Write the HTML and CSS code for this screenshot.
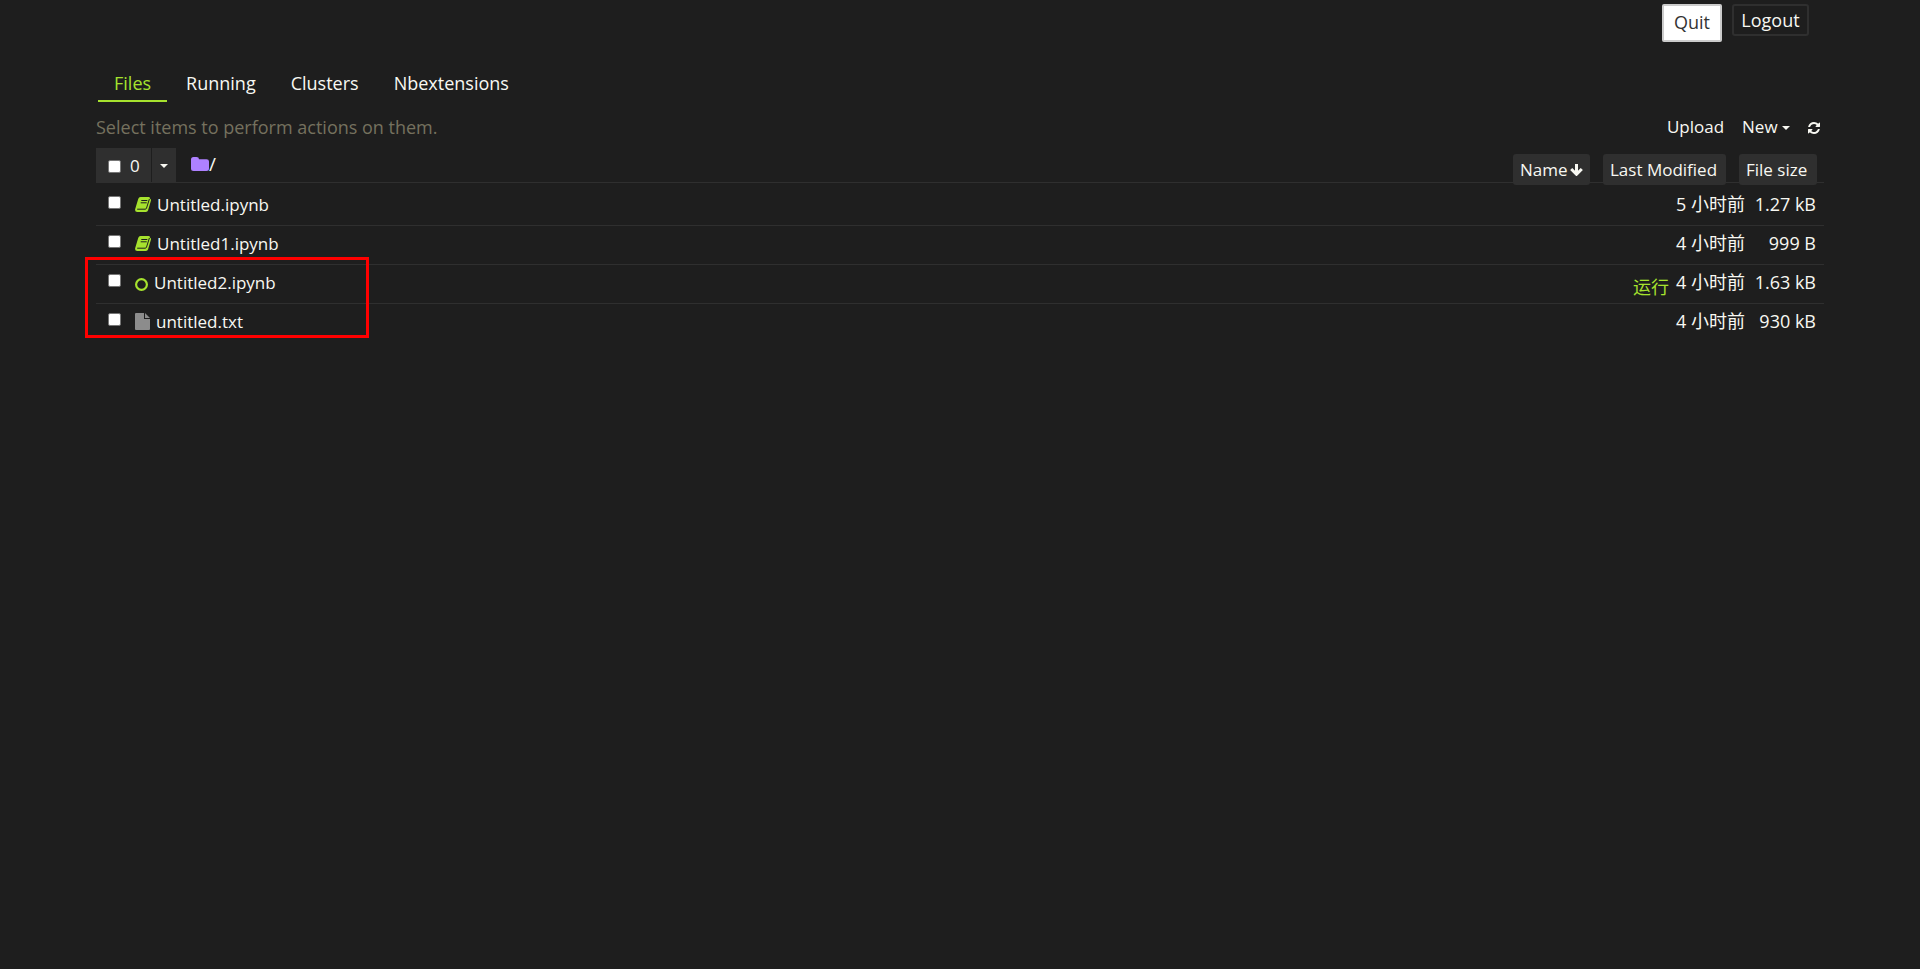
FILE: index.html
```html
<!DOCTYPE html>
<html lang="en">
<head>
    <meta charset="UTF-8">
    <meta name="viewport" content="width=device-width, initial-scale=1.0">
    <title>Home Page - Select or create a notebook</title>
    <link rel="stylesheet" href="styles.css">
</head>
<body>
    <header>
        <button class="quit">Quit</button>
        <button class="logout">Logout</button>
    </header>

    <main>
        <nav>
            <ul>
                <li><a class="active" href="#notebooks">Files</a></li>
                <li><a href="#running">Running</a></li>
                <li><a href="#clusters">Clusters</a></li>
                <li><a href="#nbextensions">Nbextensions</a></li>
            </ul>
        </nav>

        <div class="toolbar">
            <p>Select items to perform actions on them.</p>
            <div class="actions">
                <button class="upload">Upload</button>
                <button class="new">New <span class="caret"></span></button>
                <button class="refresh" aria-label="Refresh">
                    <svg width="12" height="12" viewBox="0 0 1536 1536"><path fill="currentColor" d="M1511 928q0 5-1 7-64 268-268 434.500T764 1536q-146 0-282.500-55T238 1324l-129 129q-19 19-45 19t-45-19-19-45V960q0-26 19-45t45-19h448q26 0 45 19t19 45-19 45l-137 137q71 66 161 102t187 36q134 0 250-65t186-179q11-17 53-117 8-23 30-23h192q13 0 22.500 9.500t9.500 22.500zm25-800v448q0 26-19 45t-45 19h-448q-26 0-45-19t-19-45 19-45l138-138Q969 256 768 256q-134 0-250 65T332 500q-11 17-53 117-8 23-30 23H50q-13 0-22.500-9.500T18 608v-7q65-268 270-434.500T768 0q146 0 284 55.500T1297 212l130-129q19-19 45-19t45 19 19 45z"/></svg>
                </button>
            </div>
        </div>

        <div class="list">
            <div class="list-header">
                <div class="select-group">
                    <label class="select-all"><input type="checkbox"> 0</label>
                    <button class="select-menu" aria-label="Select menu"><span class="caret"></span></button>
                </div>
                <a class="breadcrumb" href="#root">
                    <svg width="18" height="14" viewBox="0 0 18 14"><path fill="#ae81ff" d="M0 2.500Q0 0 2.500 0h3Q8 0 8 2.200h7.500q2.500 0 2.500 2.300v7q0 2.500-2.500 2.500h-13Q0 14 0 11.500z"/></svg><span>/</span>
                </a>
                <div class="sort">
                    <button class="sort-name">Name
                        <svg width="13" height="12" viewBox="0 0 13 12"><path d="M6.500 0v9M1.200 5l5.300 5.300L11.800 5" fill="none" stroke="currentColor" stroke-width="3"/></svg>
                    </button>
                    <button class="sort-date">Last Modified</button>
                    <button class="sort-size">File size</button>
                </div>
            </div>

            <div class="row first">
                <input type="checkbox" id="f1" aria-label="Untitled.ipynb">
                <svg class="book" width="16" height="15" viewBox="0 0 16 15"><path fill="#a6e22e" d="M5.500 0h8.300q1.400 0 1 1.500l.7.500q.7.700.4 1.700l-2.800 9.500q-.5 1.800-2.200 1.800H2.300Q-.5 15 .2 12L3.200 2Q3.800 0 5.500 0z"/><path d="M6.300 3.500h6M5.700 5.800h6M2.200 12.200h8q1 0 1.300-1L14.400 2" fill="none" stroke="#1e1e1e"/></svg>
                <a href="#Untitled.ipynb">Untitled.ipynb</a>
                <span class="date">5 小时前</span>
                <span class="size">1.27 kB</span>
            </div>
            <div class="row">
                <input type="checkbox" id="f2" aria-label="Untitled1.ipynb">
                <svg class="book" width="16" height="15" viewBox="0 0 16 15"><path fill="#a6e22e" d="M5.500 0h8.300q1.400 0 1 1.500l.7.500q.7.700.4 1.700l-2.800 9.500q-.5 1.800-2.200 1.800H2.300Q-.5 15 .2 12L3.200 2Q3.800 0 5.500 0z"/><path d="M6.300 3.500h6M5.700 5.800h6M2.200 12.200h8q1 0 1.300-1L14.400 2" fill="none" stroke="#1e1e1e"/></svg>
                <a href="#Untitled1.ipynb">Untitled1.ipynb</a>
                <span class="date">4 小时前</span>
                <span class="size">999 B</span>
            </div>
            <div class="row">
                <input type="checkbox" id="f3" aria-label="Untitled2.ipynb">
                <svg class="circle" width="13" height="13" viewBox="0 0 13 13"><circle cx="6.500" cy="6.500" r="5.400" fill="none" stroke="#a6e22e" stroke-width="2.200"/></svg>
                <a href="#Untitled2.ipynb">Untitled2.ipynb</a>
                <span class="running">运行</span>
                <span class="date">4 小时前</span>
                <span class="size">1.63 kB</span>
            </div>
            <div class="row">
                <input type="checkbox" id="f4" aria-label="untitled.txt">
                <svg class="file" width="15" height="17" viewBox="0 0 15 17"><path fill="#8c8c8c" d="M1 0h8v6h6v10q0 1-1 1H1q-1 0-1-1V1q0-1 1-1zM10 0l5 5h-5z"/></svg>
                <a href="#untitled.txt">untitled.txt</a>
                <span class="date">4 小时前</span>
                <span class="size">930 kB</span>
            </div>
            <div class="highlight"></div>
        </div>
    </main>
</body>
</html>
```
FILE: styles.css
```css
* {
    box-sizing: border-box;
}
body {
    margin: 0;
    background-color: #1e1e1e;
    color: #f8f8f2;
    font-family: "Open Sans", "Noto Sans CJK SC", sans-serif;
    font-size: 17px;
    line-height: 24px;
}
a {
    color: inherit;
    text-decoration: none;
}
button {
    background: none;
    border: none;
    padding: 0;
    color: inherit;
    font: inherit;
    cursor: pointer;
}
svg {
    display: block;
    flex: none;
}
input[type="checkbox"] {
    appearance: none;
    flex: none;
    width: 13px;
    height: 13px;
    margin: 0;
    background-color: #fff;
    border: 1px solid #767676;
    border-radius: 2px;
}
input[type="checkbox"]:checked {
    background-color: #a6e22e;
}
.caret {
    display: inline-block;
    border-top: 4px solid;
    border-left: 4px solid transparent;
    border-right: 4px solid transparent;
    vertical-align: middle;
}
header {
    display: flex;
    justify-content: flex-end;
    align-items: flex-start;
    gap: 10px;
    height: 64px;
    padding: 4px 111px 0 0;
}
.quit {
    width: 60px;
    height: 38px;
    padding-bottom: 2px;
    background-color: #fff;
    border: 2px solid #ccc;
    border-radius: 2px;
    color: #333;
    font-size: 18px;
}
.logout {
    width: 77px;
    height: 32px;
    border: 2px solid #2f2f2f;
    border-radius: 3px;
    font-size: 18px;
}
main {
    padding: 0 5%;
}
nav ul {
    display: flex;
    gap: 3px;
    list-style: none;
    margin: 0;
    padding: 0 2px;
}
nav a {
    display: block;
    height: 38px;
    padding: 7px 16px 0;
    font-size: 18px;
}
nav .active {
    color: #a6e22e;
    border-bottom: 2px solid #a6e22e;
}
.toolbar {
    display: flex;
    justify-content: space-between;
    height: 46px;
    padding-top: 13px;
}
.toolbar p {
    margin: 0;
    color: #75715e;
    font-size: 18px;
}
.actions {
    display: flex;
    align-items: flex-start;
    gap: 18px;
    padding-right: 4px;
}
.refresh {
    padding-top: 7px;
}
.list {
    position: relative;
}
.list-header {
    display: flex;
    height: 35px;
    border-bottom: 1px solid #2f2f2f;
}
.select-group {
    display: flex;
    gap: 1px;
}
.select-all {
    display: flex;
    align-items: center;
    gap: 9px;
    width: 55px;
    padding: 2px 0 0 12px;
    background-color: #2f2f2f;
}
.select-menu {
    width: 24px;
    background-color: #2f2f2f;
}
.select-menu .caret {
    display: block;
    width: 8px;
    margin: 2px auto 0;
}
.breadcrumb {
    display: flex;
    margin-left: 15px;
}
.breadcrumb svg {
    margin-top: 9px;
}
.breadcrumb span {
    margin-top: 4px;
    font-size: 19px;
}
.sort {
    display: flex;
    gap: 13px;
    margin: 6px 7px 0 auto;
}
.sort button {
    height: 31px;
    padding: 0 7px;
    background-color: #2f2f2f;
    border-radius: 3px;
    text-align: left;
    white-space: nowrap;
}
.sort .sort-name {
    display: flex;
    justify-content: space-between;
    align-items: center;
    width: 77px;
}
.sort .sort-date {
    width: 123px;
}
.sort .sort-size {
    width: 78px;
}
.row {
    display: flex;
    height: 39px;
    padding: 5px 8px 0 12px;
    border-bottom: 1px solid #2f2f2f;
}
.row:nth-last-child(2) {
    border-bottom: none;
}
.row.first {
    height: 43px;
    padding-top: 9px;
}
.row input {
    margin: 4px 14px 0 0;
}
.row a {
    margin: 1px 0 0 6px;
}
.row .book {
    margin-top: 5px;
}
.row .circle {
    margin-top: 8px;
}
.row .file {
    margin-top: 4px;
}
.date,
.size,
.running {
    font-size: 18px;
}
.date {
    margin-left: auto;
}
.size {
    width: 71px;
    text-align: right;
}
.running {
    margin: 5px 7px 0 auto;
    color: #a6e22e;
}
.running + .date {
    margin-left: 0;
}
.highlight {
    position: absolute;
    top: 109px;
    left: -11px;
    width: 284px;
    height: 81px;
    border: 3px solid #f00;
    pointer-events: none;
}
```
